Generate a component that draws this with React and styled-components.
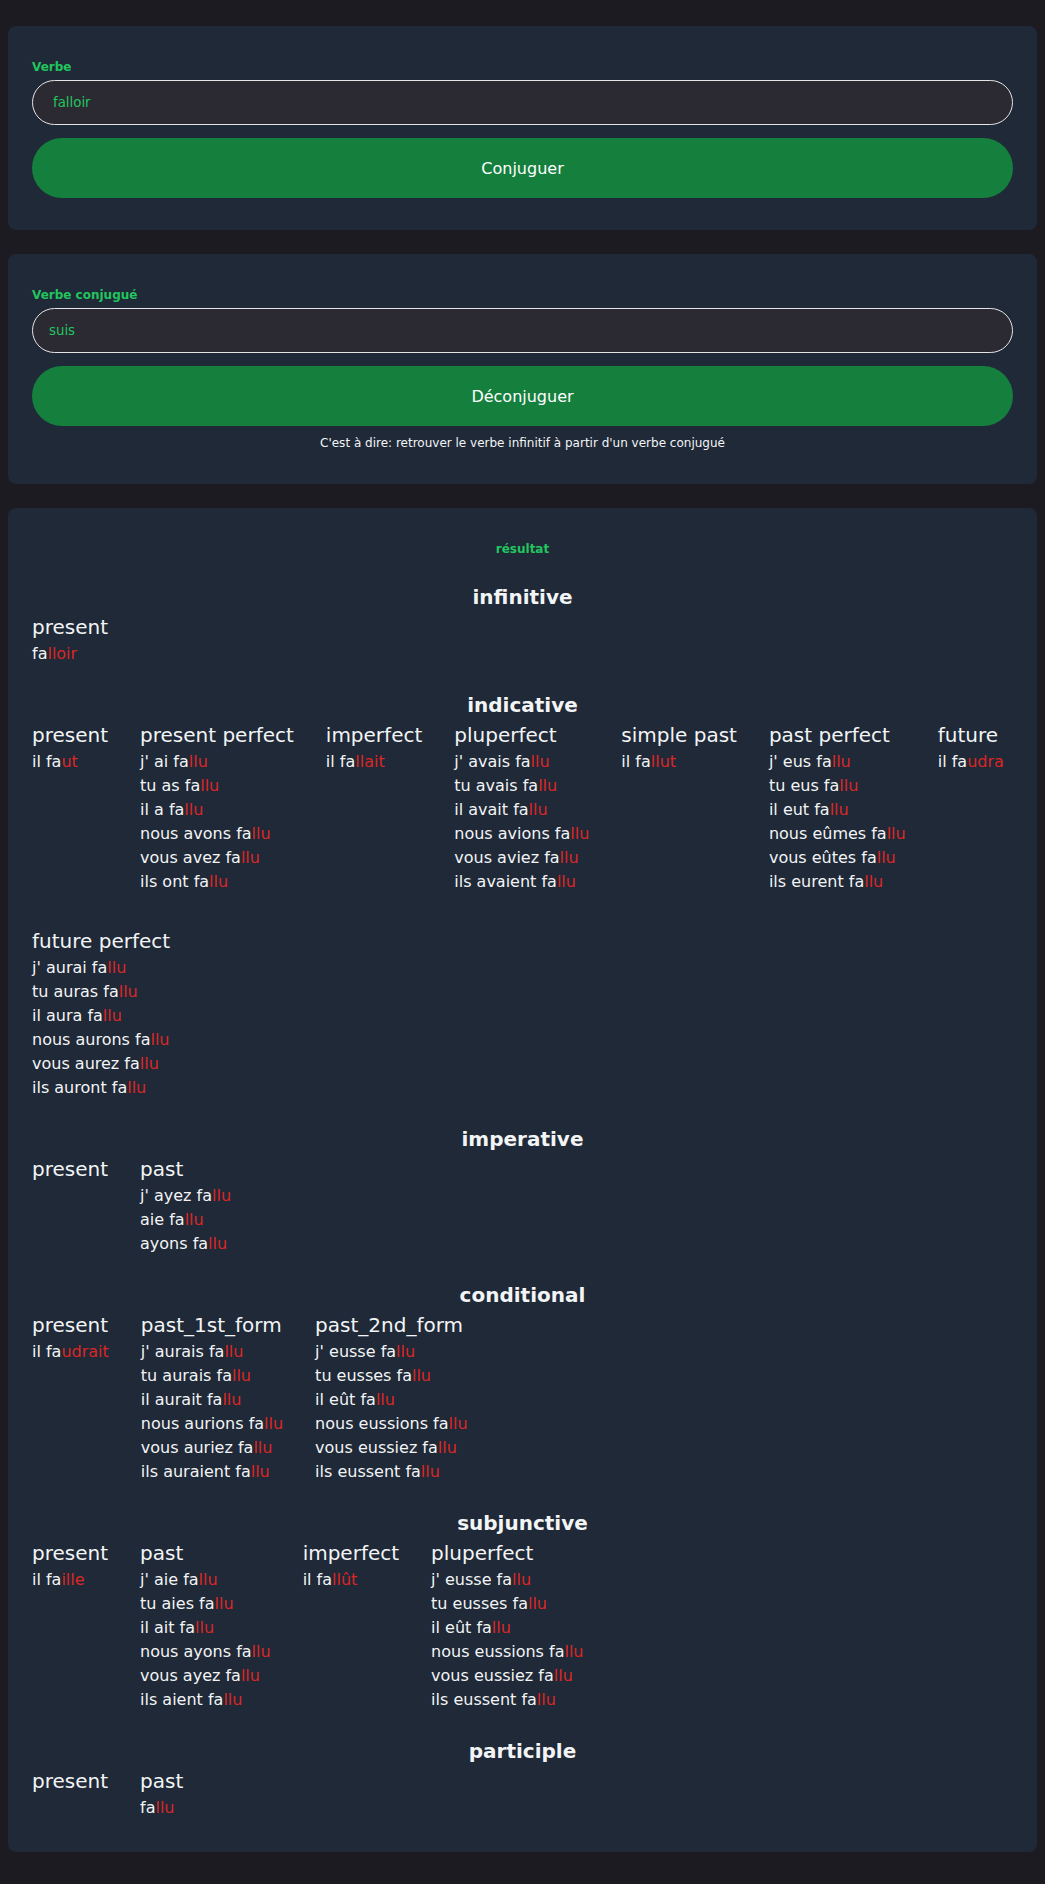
import React from "react";
import styled, { createGlobalStyle } from "styled-components";

const colors = {
  page: "#1c1b22",
  card: "#1f2937",
  input: "#2b2a33",
  green: "#22c55e",
  button: "#15803d",
  red: "#dc2626",
  text: "#f3f4f6",
};

const f = (prefix, ending) => ({ prefix, ending });
const fallu = (subjects) => subjects.map((s) => f(`${s} fa`, "llu"));

const moods = [
  {
    name: "infinitive",
    tenses: [{ name: "present", forms: [f("fa", "lloir")] }],
  },
  {
    name: "indicative",
    tenses: [
      { name: "present", forms: [f("il fa", "ut")] },
      {
        name: "present perfect",
        forms: fallu(["j' ai", "tu as", "il a", "nous avons", "vous avez", "ils ont"]),
      },
      { name: "imperfect", forms: [f("il fa", "llait")] },
      {
        name: "pluperfect",
        forms: fallu([
          "j' avais",
          "tu avais",
          "il avait",
          "nous avions",
          "vous aviez",
          "ils avaient",
        ]),
      },
      { name: "simple past", forms: [f("il fa", "llut")] },
      {
        name: "past perfect",
        forms: fallu(["j' eus", "tu eus", "il eut", "nous eûmes", "vous eûtes", "ils eurent"]),
      },
      { name: "future", forms: [f("il fa", "udra")] },
      {
        name: "future perfect",
        forms: fallu([
          "j' aurai",
          "tu auras",
          "il aura",
          "nous aurons",
          "vous aurez",
          "ils auront",
        ]),
      },
    ],
  },
  {
    name: "imperative",
    tenses: [
      { name: "present", forms: [] },
      { name: "past", forms: fallu(["j' ayez", "aie", "ayons"]) },
    ],
  },
  {
    name: "conditional",
    tenses: [
      { name: "present", forms: [f("il fa", "udrait")] },
      {
        name: "past_1st_form",
        forms: fallu([
          "j' aurais",
          "tu aurais",
          "il aurait",
          "nous aurions",
          "vous auriez",
          "ils auraient",
        ]),
      },
      {
        name: "past_2nd_form",
        forms: fallu([
          "j' eusse",
          "tu eusses",
          "il eût",
          "nous eussions",
          "vous eussiez",
          "ils eussent",
        ]),
      },
    ],
  },
  {
    name: "subjunctive",
    tenses: [
      { name: "present", forms: [f("il fa", "ille")] },
      {
        name: "past",
        forms: fallu(["j' aie", "tu aies", "il ait", "nous ayons", "vous ayez", "ils aient"]),
      },
      { name: "imperfect", forms: [f("il fa", "llût")] },
      {
        name: "pluperfect",
        forms: fallu([
          "j' eusse",
          "tu eusses",
          "il eût",
          "nous eussions",
          "vous eussiez",
          "ils eussent",
        ]),
      },
    ],
  },
  {
    name: "participle",
    tenses: [
      { name: "present", forms: [] },
      { name: "past", forms: [f("fa", "llu")] },
    ],
  },
];

const App = () => {
  return (
    <>
      <GlobalStyle />
      <Page>
        <Card>
          <Label>Verbe</Label>
          <Input defaultValue="falloir" $padLeft="20px" />
          <Button>Conjuguer</Button>
        </Card>

        <Card>
          <Label>Verbe conjugué</Label>
          <Input defaultValue="suis" $padLeft="16px" />
          <Button>Déconjuguer</Button>
          <Caption>C'est à dire: retrouver le verbe infinitif à partir d'un verbe conjugué</Caption>
        </Card>

        <ResultCard>
          <ResultLabel>résultat</ResultLabel>
          {moods.map((mood) => (
            <Mood key={mood.name}>
              <MoodTitle>{mood.name}</MoodTitle>
              <Tenses>
                {mood.tenses.map((tense) => (
                  <Tense key={tense.name}>
                    <TenseName>{tense.name}</TenseName>
                    {tense.forms.map((form, i) => (
                      <Form key={i}>
                        {form.prefix}
                        <Ending>{form.ending}</Ending>
                      </Form>
                    ))}
                  </Tense>
                ))}
              </Tenses>
            </Mood>
          ))}
        </ResultCard>
      </Page>
    </>
  );
};

const GlobalStyle = createGlobalStyle`
  html, body {
    margin: 0;
    background: ${colors.page};
    font-family: "DejaVu Sans", Verdana, sans-serif;
    color: ${colors.text};
  }
  * {
    box-sizing: border-box;
  }
`;

const Page = styled.div`
  display: flex;
  flex-direction: column;
  gap: 24px;
  padding: 26px 8px 32px;
`;

const Card = styled.div`
  background: ${colors.card};
  border-radius: 8px;
  padding: 32px 24px;
  display: flex;
  flex-direction: column;
`;

const Label = styled.label`
  color: ${colors.green};
  font-size: 12px;
  font-weight: bold;
  line-height: 18px;
  margin-bottom: 4px;
`;

const Input = styled.input`
  height: 45px;
  width: 100%;
  background: ${colors.input};
  border: 1px solid #e5e5e5;
  border-radius: 9999px;
  padding: 0 16px 0 ${({ $padLeft }) => $padLeft};
  color: ${colors.green};
  font-family: "DejaVu Sans", sans-serif;
  font-size: 13.33px;
  outline: none;
`;

const Button = styled.button`
  margin-top: 13px;
  height: 60px;
  width: 100%;
  border: none;
  border-radius: 9999px;
  background: ${colors.button};
  color: #fff;
  font-family: "DejaVu Sans", sans-serif;
  font-size: 16px;
  cursor: pointer;
`;

const Caption = styled.p`
  margin: 8px 0 0;
  text-align: center;
  font-size: 12px;
  line-height: 18px;
  color: ${colors.text};
`;

const ResultCard = styled(Card)`
  gap: 24px;
`;

const ResultLabel = styled.div`
  text-align: center;
  color: ${colors.green};
  font-size: 12px;
  font-weight: bold;
  line-height: 18px;
`;

const Mood = styled.section`
  display: flex;
  flex-direction: column;
`;

const MoodTitle = styled.h2`
  margin: 0;
  text-align: center;
  font-size: 20px;
  font-weight: bold;
  line-height: 30px;
`;

const Tenses = styled.div`
  display: flex;
  flex-wrap: wrap;
  gap: 32px;
`;

const Tense = styled.div`
  display: flex;
  flex-direction: column;
`;

const TenseName = styled.div`
  font-size: 20px;
  line-height: 30px;
  white-space: nowrap;
`;

const Form = styled.div`
  font-size: 16px;
  line-height: 24px;
  white-space: nowrap;
`;

const Ending = styled.span`
  color: ${colors.red};
`;

export default App;
